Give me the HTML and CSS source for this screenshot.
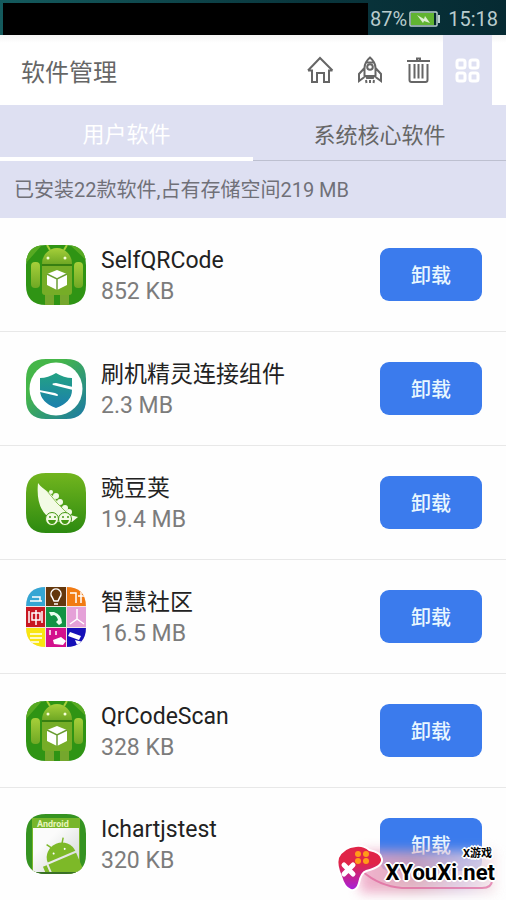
FILE: index.html
```html
<!DOCTYPE html>
<html lang="zh-CN">
<head>
<meta charset="utf-8">
<meta name="viewport" content="width=device-width, initial-scale=1">
<title>软件管理</title>
<link rel="stylesheet" href="styles.css">
</head>
<body>
<svg class="defs" aria-hidden="true">
  <defs>
    <linearGradient id="leaf" x1="0" y1="0" x2="0" y2="1"><stop offset="0" stop-color="#72b51e"/><stop offset="1" stop-color="#2c8a10"/></linearGradient>
    <linearGradient id="robot" x1="0" y1="0" x2="0" y2="1"><stop offset="0" stop-color="#a6cf3a"/><stop offset="1" stop-color="#6fa824"/></linearGradient>
    <linearGradient id="ring" x1="0" y1="0" x2="1" y2="1"><stop offset="0.3" stop-color="#45b649"/><stop offset="1" stop-color="#1a78a8"/></linearGradient>
    <linearGradient id="shield" x1="0" y1="0" x2="0" y2="1"><stop offset="0" stop-color="#23a283"/><stop offset="1" stop-color="#1b7fae"/></linearGradient>
    <linearGradient id="paper" x1="0" y1="0" x2="1" y2="1"><stop offset="0.3" stop-color="#fbfbfb"/><stop offset="1" stop-color="#cfd4d2"/></linearGradient>
    <linearGradient id="pad" x1="0" y1="0" x2="0" y2="1"><stop offset="0.4" stop-color="#e02548"/><stop offset="1" stop-color="#a81fd8"/></linearGradient>
    <clipPath id="tile"><path d="M20 0h20q20 0 20 20v20q0 20-20 20H20Q0 60 0 40V20Q0 0 20 0Z"/></clipPath>
    <symbol id="android" viewBox="0 0 60 60">
      <g clip-path="url(#tile)">
        <rect width="60" height="60" fill="#2f9414"/>
        <path d="M0 0h60v15L44 0H16L0 18z" fill="#57aa22"/>
        <rect x="5" y="17" width="9" height="26" rx="4" fill="url(#robot)"/>
        <rect x="48" y="17" width="9" height="26" rx="4" fill="url(#robot)"/>
        <path d="M19 46h9v14h-9zM34 46h9v14h-9z" fill="#75a72d"/>
        <path d="M16 20h30v27q0 3-3 3H19q-3 0-3-3z" fill="#76ad27"/>
        <path d="M16 19a15 16 0 0 1 30 0z" fill="url(#robot)"/>
        <path d="M21 0l3 5M41 0l-3 5" stroke="#a6cf3a" stroke-width="2"/>
        <path d="M16 20h30" stroke="#377f11" stroke-width="2"/>
        <circle cx="22" cy="13" r="1.500" fill="#f5ffd9"/><circle cx="39" cy="13" r="1.500" fill="#f5ffd9"/>
        <path d="M31 25l10 4v11l-10 5-10-5V29z" fill="#fff"/>
        <path d="M21 29l10 5 10-5M31 34v11" stroke="#6b9e34" stroke-width="1.500" fill="none"/>
      </g>
    </symbol>
  </defs>
</svg>

<div class="app">
  <div class="status">
    <div class="status-mask"></div>
    <span>87%</span>
    <svg class="battery" viewBox="0 0 32 16" role="img" aria-label="充电中">
      <rect x="1" y="1" width="27" height="14" rx="1" fill="#06292e" stroke="#bcd0d0" stroke-width="1.500"/>
      <rect x="2" y="2" width="23" height="12" fill="#61b431"/>
      <path d="M29 4h2v8h-2z" fill="#bcd0d0"/>
      <path d="M8 4l7 4 1-3 5 7-6-2-1 2z" fill="#dcefcf"/>
    </svg>
    <time>15:18</time>
  </div>

  <header class="header">
    <h1>软件管理</h1>
    <nav class="tools">
      <button type="button" aria-label="主页">
        <svg viewBox="0 0 28 28"><path d="M1 14.500L13 2l12.500 12.500M1 14.500h4v11.500h5V17h7v9h5V14.500h3.500"/></svg>
      </button>
      <button type="button" aria-label="加速">
        <svg class="rocket" viewBox="0 0 28 28"><path d="M14 1.500C10 5 8.500 8 8.500 12v8h11v-8c0-4-1.500-7-5.500-10.500zM8.500 12L3 18v7l5.500-4M19.500 12l5.500 6v7l-5.500-4M10.500 6.500h7M10 20l1 2h6l1-2M10 24l.5 3M14 24v3M18 24l-.5 3"/><circle cx="14" cy="11" r="2.800"/></svg>
      </button>
      <button type="button" aria-label="清理">
        <svg viewBox="0 0 28 28"><path d="M2 5h23M12 5V2.500h3V5M4.500 8v16q0 2 2 2h14q2 0 2-2V8M9.500 8v14.500M13.500 8v14.500M17.500 8v14.500"/></svg>
      </button>
      <button type="button" class="current" aria-label="软件管理">
        <svg viewBox="0 0 28 28"><rect x="3" y="4" width="8" height="8" rx="2"/><rect x="16" y="4" width="8" height="8" rx="2"/><rect x="3" y="17" width="8" height="8" rx="2"/><rect x="16" y="17" width="8" height="8" rx="2"/></svg>
      </button>
    </nav>
  </header>

  <div class="tabs">
    <button type="button" class="tab selected">用户软件</button>
    <button type="button" class="tab">系统核心软件</button>
  </div>
  <p class="summary">已安装22款软件,占有存储空间219 MB</p>

  <ul class="list">
    <li class="row">
      <svg class="icon"><use href="#android"/></svg>
      <div class="info"><h2>SelfQRCode</h2><p>852 KB</p></div>
      <button type="button" class="remove">卸载</button>
    </li>
    <li class="row">
      <svg class="icon" viewBox="0 0 60 60">
        <g clip-path="url(#tile)">
          <rect width="60" height="60" fill="url(#ring)"/>
          <circle cx="30" cy="30" r="26.500" fill="#fff"/>
          <path d="M30 14q8 5 16 5v12q0 12-16 18-16-6-16-18V19q8 0 16-5z" fill="url(#shield)"/>
          <path d="M47 28l-17-4q-5 0-3 2l20 5zM13 31l16 3q5 2 2 3l-17-4z" fill="#fff"/>
        </g>
      </svg>
      <div class="info"><h2>刷机精灵连接组件</h2><p>2.3 MB</p></div>
      <button type="button" class="remove">卸载</button>
    </li>
    <li class="row">
      <svg class="icon" viewBox="0 0 60 60">
        <g clip-path="url(#tile)">
          <rect width="60" height="60" fill="url(#leaf)"/>
          <path d="M12 10C18 18 24 18 30 27Q38 38 44 42l8 2-6 5H30Q9 40 12 10z" fill="#f3fbe5"/>
          <circle cx="25" cy="19" r="2" fill="#f3fbe5"/><circle cx="30" cy="23" r="3" fill="#f3fbe5"/><circle cx="34" cy="29" r="3" fill="#f3fbe5"/><circle cx="39" cy="35" r="3" fill="#f3fbe5"/><circle cx="43" cy="39" r="3" fill="#f3fbe5"/>
          <path d="M21 18q10 13 20 22" stroke="#8cc055" fill="none"/>
          <circle cx="26" cy="46" r="6.500" fill="#f3fbe5" stroke="#429611"/><circle cx="39" cy="46" r="6.500" fill="#f3fbe5" stroke="#429611"/>
          <path d="M22 47h8q-1 4-4 4t-4-4zM35 47h8q-1 4-4 4t-4-4z" fill="#449914"/>
          <path d="M23 44h2M28 44h2M36 44h2M41 44h2" stroke="#449914" stroke-width="1.500"/>
        </g>
      </svg>
      <div class="info"><h2>豌豆荚</h2><p>19.4 MB</p></div>
      <button type="button" class="remove">卸载</button>
    </li>
    <li class="row">
      <svg class="icon" viewBox="0 0 60 60">
        <g clip-path="url(#tile)">
          <rect width="60" height="60" fill="#f4e6e4"/>
          <path fill="#35a6d4" d="M0 0h19v19H0z"/><path fill="#64370c" d="M20 0h20v19H20z"/><path fill="#f17b13" d="M41 0h19v19H41z"/>
          <path fill="#c81722" d="M0 20h19v20H0z"/><path fill="#129344" d="M20 20h20v20H20z"/><path fill="#e5a1d8" d="M41 20h19v20H41z"/>
          <path fill="#f8e511" d="M0 41h19v19H0z"/><path fill="#d3108c" d="M20 41h20v19H20z"/><path fill="#1510b8" d="M41 41h19v19H41z"/>
          <path d="M4 14h12M6 10h8v4M26 10a5 5 0 1 1 8 0l-2 4h-4zM28 17h4M44 6h6v10M55 5v11M52 9h6M3 24v12M16 24v12M6 26h8v7H6zM10 23v15M51 22v10l-7 5M51 32l7 5M4 47h12M4 51h12M24 43v5M30 44v4M3 55h10" fill="none" stroke="#fff" stroke-width="1.500"/>
          <path d="M23 25h5q8 3 8 11l-3 2-3-3 2-2q-1-4-4-5l-3 1z" fill="#eaffef"/>
          <path d="M27 53l8-3 5 4-3 4-9-1zM44 45l11 4-2 4-11-4zM49 53l8 2-6 3z" fill="#fff"/>
        </g>
      </svg>
      <div class="info"><h2>智慧社区</h2><p>16.5 MB</p></div>
      <button type="button" class="remove">卸载</button>
    </li>
    <li class="row">
      <svg class="icon"><use href="#android"/></svg>
      <div class="info"><h2>QrCodeScan</h2><p>328 KB</p></div>
      <button type="button" class="remove">卸载</button>
    </li>
    <li class="row">
      <svg class="icon" viewBox="0 0 60 60">
        <g clip-path="url(#tile)">
          <rect width="60" height="60" fill="#359321"/>
          <path d="M6 4h48v54H6z" fill="#77b62b"/>
          <path d="M7 14h46v44H7z" fill="url(#paper)"/>
          <text class="icon-label" x="11" y="13">Android</text>
          <g transform="rotate(-23 38 46)">
            <path d="M22 42a15 14 0 0 1 30 0z" fill="#7db928"/>
            <path d="M22 44h30v24H22zM16 44h4v12h-4z" fill="#7db928"/>
            <path d="M28 25l4 6M46 25l-4 6" stroke="#7db928" stroke-width="1.500"/>
            <circle cx="31" cy="36" r="1" fill="#fff"/><circle cx="43" cy="36" r="1" fill="#fff"/>
          </g>
          <path d="M4 58h52v2H4z" fill="#397026"/>
        </g>
      </svg>
      <div class="info"><h2>Ichartjstest</h2><p>320 KB</p></div>
      <button type="button" class="remove">卸载</button>
    </li>
  </ul>

  <div class="brand">
    <div class="glow"></div>
    <svg class="swoosh" viewBox="0 0 136 24"><path d="M2 2q17 15 40 17h80q10 0 10-8" fill="none" stroke="#dc5391" stroke-width="2" opacity=".6"/></svg>
    <svg class="pad" viewBox="0 0 48 48">
      <path d="M3 13Q8 3 20 2q7-1 13 4 11 2 12 8 1 7-15 11-6 2-8 13-2 7-7 6-6-2-9-13-5-11-3-18z" fill="url(#pad)" stroke="#fff" stroke-width="4" paint-order="stroke"/>
      <path d="M8 20l9 9M17 20l-9 9" stroke="#fff" stroke-width="5" stroke-linecap="round"/>
      <circle cx="22" cy="9" r="3" fill="#ff9b18"/><circle cx="30" cy="9" r="3" fill="#ff9b18"/><circle cx="22" cy="16" r="3" fill="#ff9b18"/><circle cx="30" cy="16" r="3" fill="#ff9b18"/>
    </svg>
    <div class="brand-text"><small>X游戏</small><strong>XYouXi.net</strong></div>
  </div>
</div>
</body>
</html>
```
FILE: styles.css
```css
* { box-sizing: border-box; }
body, h1, h2, p, ul { margin: 0; padding: 0; }
body {
  font-family: Roboto, "Noto Sans CJK SC", sans-serif;
  background: #fefefe;
  color: #666;
}
button {
  margin: 0;
  padding: 0;
  border: 0;
  background: none;
  font: inherit;
  color: inherit;
}
.defs { position: absolute; width: 0; height: 0; }
.app { position: relative; min-height: 100vh; overflow: hidden; }

.status {
  display: flex;
  align-items: center;
  height: 35px;
  padding: 3px 8px 0 3px;
  background: linear-gradient(90deg, #145a5d, #09363d 60%, #062a32);
  color: #b9cccd;
  font-size: 20px;
  line-height: 32px;
}
.status-mask { flex: 1; align-self: stretch; margin-right: 2px; background: #000; }
.battery { width: 32px; height: 16px; margin: 0 7px 0 2px; }

.header {
  display: flex;
  justify-content: space-between;
  height: 70px;
  padding: 0 14px 0 21px;
  background: linear-gradient(#f4f4f4, #fff 8px);
}
.header h1 { font-size: 24px; font-weight: 400; line-height: 76px; }
.tools { display: flex; }
.tools button { display: grid; place-items: center; width: 49px; }
.tools svg { width: 28px; height: 28px; fill: none; stroke: #666; stroke-width: 2; }
.tools .current { background: #dee0f2; }
.tools .current svg { stroke: #fff; stroke-width: 3; }

.tabs { display: flex; background: #dee0f2; }
.tab {
  flex: 1;
  height: 56px;
  padding-top: 6px;
  border-bottom: 1px solid #bdc0d0;
  font-size: 22px;
  line-height: 48px;
}
.tab.selected { border-bottom: 4px solid #fff; color: #fff; }
.summary {
  height: 57px;
  padding-left: 14px;
  background: #dee0f2;
  color: #707078;
  font-size: 20px;
  line-height: 59px;
}

.list { list-style: none; }
.row {
  display: flex;
  align-items: center;
  height: 114px;
  padding: 0 24px 0 26px;
  border-bottom: 1px solid #e8e8e8;
}
.row:last-child { height: 112px; border: 0; }
.icon { width: 60px; height: 60px; flex: none; }
.icon-label { font: bold 9px Roboto, sans-serif; fill: #e7f5bd; }
.info { flex: 1; margin-left: 15px; padding-top: 2px; line-height: 31px; }
.info h2 { font-size: 23px; font-weight: 400; color: #222; }
.info p { font-size: 23px; color: #7c7c7c; }
.remove {
  width: 102px;
  height: 53px;
  border-radius: 9px;
  background: #3b7bed;
  color: #e9f7ff;
  font-size: 20px;
  font-weight: 500;
}

.brand {
  position: absolute;
  right: 11px;
  bottom: 7px;
  display: flex;
  align-items: flex-end;
}
.glow {
  position: absolute;
  inset: 6px 0 0 24px;
  background: linear-gradient(90deg, #f0a5c5, #d9a2b5 40%, #dac5df 75%, #f5e2e5);
  opacity: 0.85;
  filter: blur(6px);
}
.pad { position: relative; width: 48px; height: 48px; margin-right: 2px; overflow: visible; }
.swoosh { position: absolute; left: 24px; bottom: 0; width: 136px; height: 24px; }
.brand-text {
  position: relative;
  display: flex;
  flex-direction: column;
  align-items: flex-end;
  padding-bottom: 8px;
  font-family: Roboto, "Noto Sans CJK SC", sans-serif;
  color: #000;
  text-shadow: 2px 0 #fff, -2px 0 #fff, 0 2px #fff, 0 -2px #fff, 1px 1px #fff, -1px -1px #fff, 1px -1px #fff, -1px 1px #fff;
}
.brand-text small { font-size: 11px; font-weight: 700; line-height: 14px; padding-right: 3px; }
.brand-text strong { font-size: 22px; line-height: 24px; }
```
